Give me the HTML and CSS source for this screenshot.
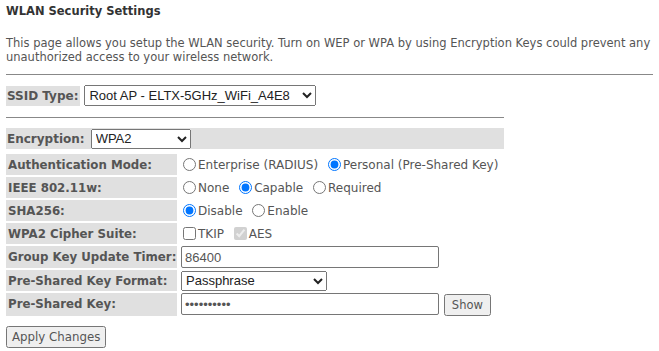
FILE: index.html
```html
<!DOCTYPE html>
<html lang="en">
<head>
    <meta charset="UTF-8">
    <meta name="viewport" content="width=device-width, initial-scale=1.0">
    <title>WLAN Security Settings</title>
    <link rel="stylesheet" href="styles.css">
</head>
<body>
    <h2 class="page-title">WLAN Security Settings</h2>
    <p class="intro">This page allows you setup the WLAN security. Turn on WEP or WPA by using Encryption Keys could prevent any unauthorized access to your wireless network.</p>
    <hr class="rule-full">

    <div class="ssid-row">
        <span class="label-box">SSID Type:</span>
        <select class="ssid-select">
            <option>Root AP - ELTX-5GHz_WiFi_A4E8</option>
        </select>
    </div>
    <hr class="rule-half">

    <div class="enc-row">
        <span class="enc-label">Encryption:</span>
        <select class="enc-select">
            <option>WPA2</option>
        </select>
    </div>

    <table class="settings">
        <tr>
            <td class="key">Authentication Mode:</td>
            <td class="val">
                <label><input type="radio" name="auth">Enterprise (RADIUS)</label>
                <label><input type="radio" name="auth" checked>Personal (Pre-Shared Key)</label>
            </td>
        </tr>
        <tr>
            <td class="key">IEEE 802.11w:</td>
            <td class="val">
                <label><input type="radio" name="pmf">None</label>
                <label><input type="radio" name="pmf" checked>Capable</label>
                <label><input type="radio" name="pmf">Required</label>
            </td>
        </tr>
        <tr>
            <td class="key">SHA256:</td>
            <td class="val">
                <label><input type="radio" name="sha" checked>Disable</label>
                <label><input type="radio" name="sha">Enable</label>
            </td>
        </tr>
        <tr>
            <td class="key">WPA2 Cipher Suite:</td>
            <td class="val cipher">
                <label><input type="checkbox">TKIP</label>
                <label><input type="checkbox" checked disabled>AES</label>
            </td>
        </tr>
        <tr>
            <td class="key">Group Key Update Timer:</td>
            <td class="val"><input type="text" class="text-in" value="86400"></td>
        </tr>
        <tr>
            <td class="key">Pre-Shared Key Format:</td>
            <td class="val">
                <select class="fmt-select">
                    <option>Passphrase</option>
                </select>
            </td>
        </tr>
        <tr>
            <td class="key">Pre-Shared Key:</td>
            <td class="val">
                <input type="password" class="text-in" value="0123456789">
                <button class="small-btn">Show</button>
            </td>
        </tr>
    </table>

    <button class="apply-btn">Apply Changes</button>
</body>
</html>
```

FILE: styles.css
```css
body {
    margin: 0;
    padding: 0 6px;
    font-family: "DejaVu Sans", Verdana, sans-serif;
    font-size: 11.5px;
    color: #555;
    background: #fff;
}
.page-title {
    margin: 4px 0 0 0;
    font-size: 11.5px;
    font-weight: bold;
    color: #333;
    line-height: 14px;
}
.intro {
    margin: 18px 0 0 0;
    line-height: 14px;
}
hr {
    border: none;
    border-top: 1px solid #888;
    margin: 0;
}
.rule-full {
    margin-top: 10px;
}
.rule-half {
    width: 498px;
    margin-top: 11px;
}
.ssid-row {
    display: flex;
    align-items: center;
    gap: 4px;
    margin-top: 10px;
}
.label-box {
    background: #e0e0e0;
    font-weight: bold;
    font-size: 12px;
    padding: 0 2px 0 1px;
    line-height: 20px;
}
select, input, button {
    font-family: "Liberation Sans", Arial, sans-serif;
    font-size: 13px;
    color: #222;
    margin: 0;
}
.ssid-select {
    width: 232px;
    height: 21px;
}
.enc-row {
    display: flex;
    align-items: center;
    background: #e0e0e0;
    width: 498px;
    height: 21px;
    margin-top: 10px;
}
.enc-label {
    font-weight: bold;
    font-size: 12px;
    padding: 0 6px 0 1px;
}
.enc-select {
    width: 100px;
    height: 20px;
}
.settings {
    border-collapse: separate;
    border-spacing: 0 2px;
    margin-top: 3px;
    width: 498px;
}
.settings td {
    height: 21px;
    padding: 0;
    white-space: nowrap;
}
.key {
    background: #e0e0e0;
    font-weight: bold;
    font-size: 11.8px;
    width: 169px;
    padding-left: 2px !important;
}
.val {
    padding-left: 4px !important;
    font-size: 12px;
}
.val label {
    margin-right: 4px;
}
.val input[type=radio], .val input[type=checkbox] {
    margin: 0 2px 0 2px;
    vertical-align: -2px;
}
.text-in {
    width: 258px;
    height: 22px;
    box-sizing: border-box;
    border: 1px solid #767676;
    border-radius: 2px;
    padding: 0 3px;
    color: #555;
}
.fmt-select {
    width: 146px;
    height: 20px;
}
.small-btn {
    padding: 1px 6px;
    margin-left: 1px;
    color: #555;
    font-family: "DejaVu Sans", Verdana, sans-serif;
    font-size: 11.5px;
    height: 22px;
}
.apply-btn {
    margin-top: 8px;
    padding: 2px 4px;
    color: #555;
    font-family: "DejaVu Sans", Verdana, sans-serif;
    font-size: 11.8px;
    height: 22px;
}
```
